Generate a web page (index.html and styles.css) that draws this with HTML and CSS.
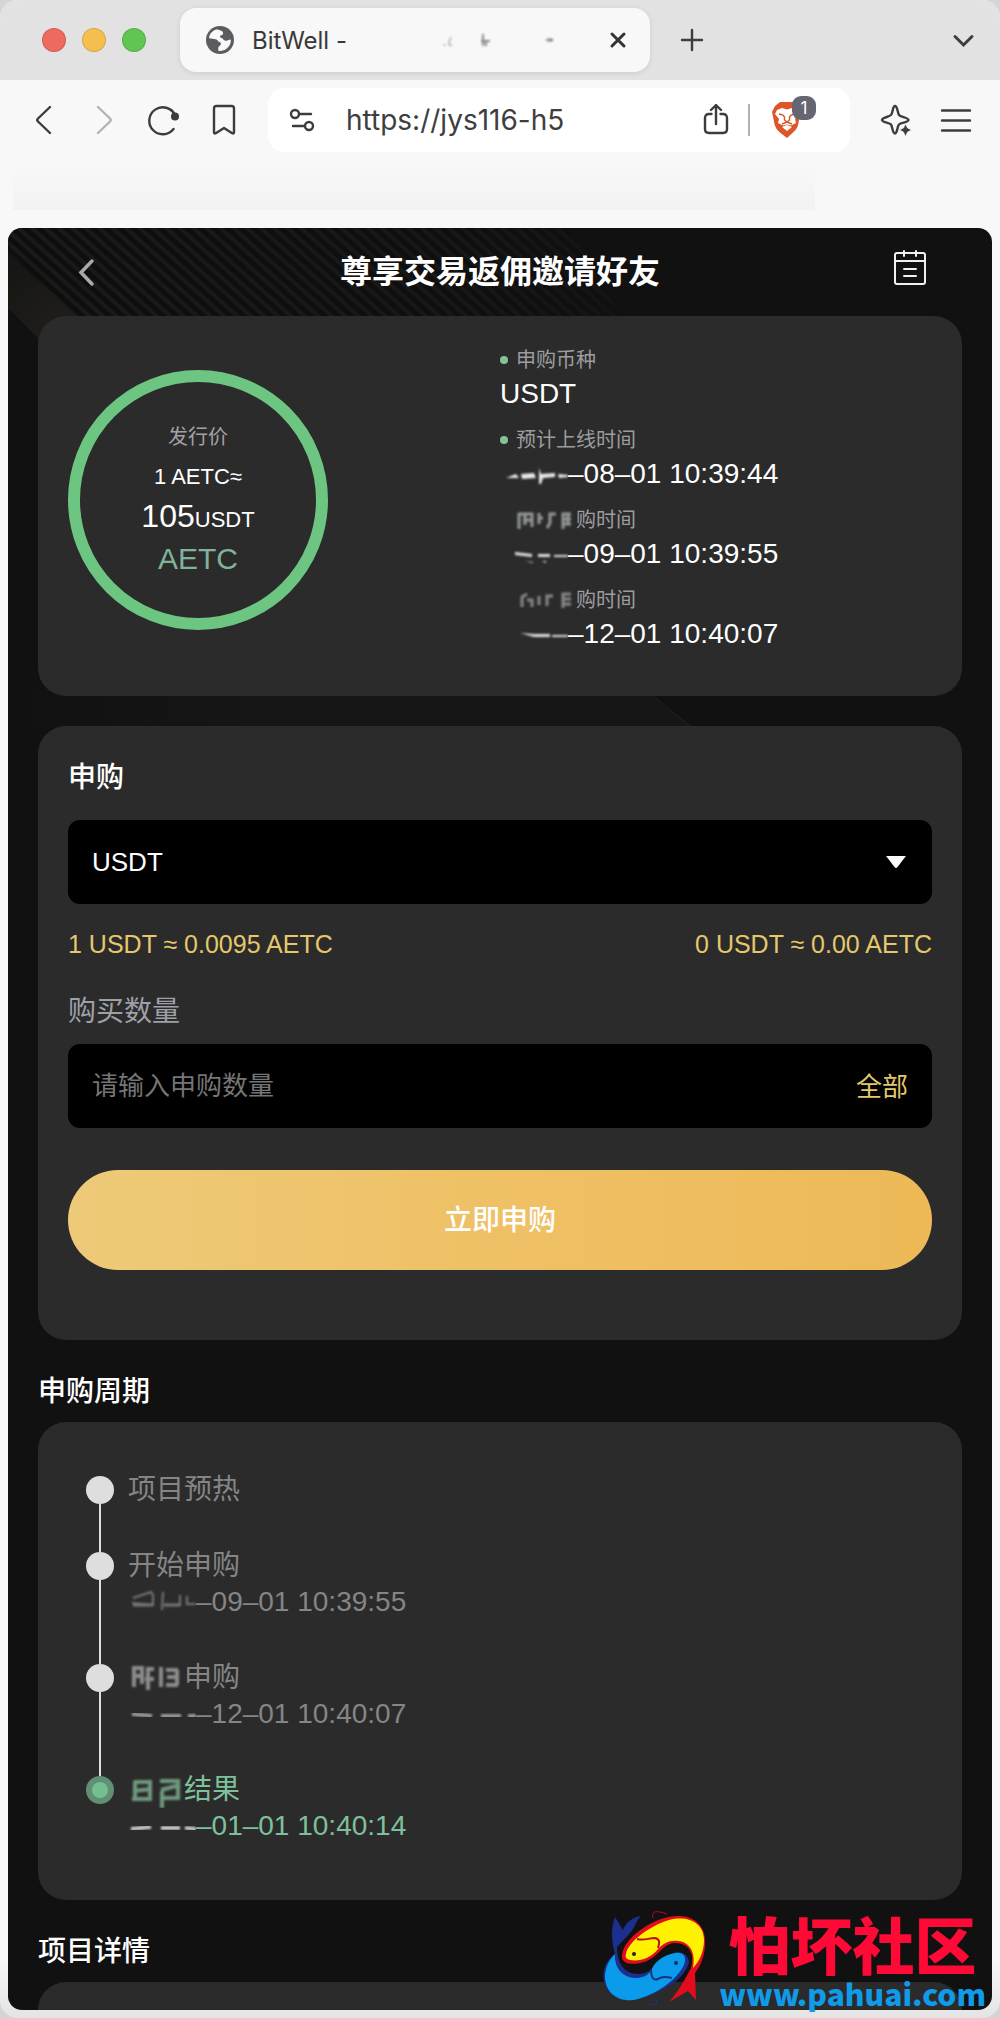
FILE: index.html
```html
<!DOCTYPE html>
<html lang="zh-CN">
<head>
<meta charset="utf-8">
<meta name="viewport" content="width=device-width, initial-scale=1">
<title>BitWell</title>
<link rel="stylesheet" href="styles.css">
</head>
<body>
<svg width="0" height="0" class="defs" aria-hidden="true">
  <defs>
    <filter id="smear" x="-10%" y="-30%" width="120%" height="160%"><feGaussianBlur stdDeviation="0.8"/></filter>
  </defs>
</svg>
<div class="window">
  <div class="tabstrip">
    <div class="lights"><span class="light red"></span><span class="light amber"></span><span class="light green"></span></div>
    <div class="tab">
      <svg class="favicon" viewBox="0 0 28 28"><circle cx="14" cy="14" r="14" fill="#5b5c5f"/><path d="M10 3.5C7 4.600 4.500 7 3.300 10l-.3 2.200c2.500-.2 4 1 6.600 1 2.200.2 2.400 2.600 4.400 3 1.500.4 1.200 2.600-.4 3.600-1.400 1-1.600 2.800-1.200 4.900 4 .8 8-1 10.300-4.200 1.600-2 2.300-4.500 2.100-7-2.200-.1-2.600 1.500-5.300 1.200-2.500-.3-2.300-2.700-4.600-2.900-1.200-.2-1.300-2.300.4-2.500 2.500-.3 2.200-3 .5-4.200-1.400-1-3.500-1.600-5.800-1.600z" fill="#f8f8f8"/></svg>
      <span class="tab-title">BitWell -</span>
      <svg class="tab-smear" viewBox="0 0 130 30" aria-hidden="true"><g filter="url(#smear)" stroke="#888" fill="none"><path d="M19 12l-2 5v3h3" stroke-width="1"/><path d="M11 20h3" stroke="#ccc" stroke-width="2"/><path d="M51 9v12M49 16h9M54 16v5" stroke-width="2"/><path d="M112 15h5" stroke="#bbb"/><path d="M115 15h6" stroke-width="3"/></g></svg>
      <button class="icon-btn small" aria-label="关闭标签页"><svg viewBox="0 0 20 20" width="20" height="20"><path d="M4 4l12 12M16 4L4 16" stroke="#333" stroke-width="3" stroke-linecap="round"/></svg></button>
    </div>
    <button class="icon-btn" aria-label="新标签页"><svg viewBox="0 0 32 32"><path d="M16 6v20M6 16h20" stroke="#3d3d3d" stroke-width="2.400" stroke-linecap="round"/></svg></button>
    <button class="icon-btn tab-menu" aria-label="标签页列表"><svg viewBox="0 0 32 32" fill="none"><path d="M7 12.500l8.500 8.500 8.500-8.500" stroke="#3d3d3d" stroke-width="3" stroke-linecap="round"/></svg></button>
  </div>

  <div class="toolbar">
    <button class="icon-btn" aria-label="后退"><svg viewBox="0 0 32 32" fill="none"><path d="M22 3L10 14.500q-1.500 1.500 0 3L22 29" stroke="#3c3c3e" stroke-width="2.400"  stroke-linecap="round"/></svg></button>
    <button class="icon-btn" aria-label="前进"><svg viewBox="0 0 32 32" fill="none"><path d="M10 3l12 11.500q1.500 1.500 0 3L10 29" stroke="#b3b3b5" stroke-width="2.400" stroke-linecap="round"/></svg></button>
    <button class="icon-btn" aria-label="刷新"><svg viewBox="0 0 32 32" fill="none"><path d="M27 11A13.500 13.500 0 1 0 25.500 25" stroke="#3c3c3e" stroke-width="2.400" stroke-linecap="round"/><circle cx="27" cy="12.500" r="4" fill="#3c3c3e"/></svg></button>
    <button class="icon-btn" aria-label="书签"><svg viewBox="0 0 32 32" fill="none"><path d="M8.500 2h15q2.500 0 2.500 2.500V28q0 2-1.800 1.200L16 24l-8.200 5.200Q6 30 6 28V4.500Q6 2 8.500 2z" stroke="#3c3c3e" stroke-width="2.400" stroke-linejoin="round"/></svg></button>
    <div class="address">
      <svg class="icon" viewBox="0 0 32 32" fill="none" stroke="#3c3c3e" stroke-width="2.400" stroke-linecap="round"><circle cx="9" cy="10" r="4"/><path d="M13 10h12M7 22h12"/><circle cx="23" cy="22" r="4"/></svg>
      <input class="url" type="text" value="https://jys116-h5" aria-label="地址栏">
      <button class="icon-btn" aria-label="分享"><svg viewBox="0 0 32 32" fill="none" stroke="#3c3c3e" stroke-width="2.400" stroke-linecap="round" stroke-linejoin="round"><path d="M11.500 10H9q-4 0-4 4v11q0 4 4 4h14q4 0 4-4V14q0-4-4-4h-2.500M16 20V1M11 6l5-5 5 5"/></svg></button>
      <span class="divider"></span>
      <button class="icon-btn shield" aria-label="防护：1"><svg viewBox="0 0 32 36"><path d="M10 0h13l4 4 3 5-1.500 12q-1 6-5 9L17 36l-6.500-5q-5-4-6-9L2 10l3-6z" fill="#dd5529"/><path d="M7 8l5-2 5 1.500L22 6l5 2 2 4-4 5 1 4-5 2.500-4-1-4 1L8 21l1-4-4-5z" fill="#fff"/><path d="M12 25l5-2 5 2-5 4z" fill="#fff"/><path d="M9 12l4 1 1.500 2v3l2.500 2 2.500-2v-3l1.500-2 4-1M12 22l5-2 5 2" fill="none" stroke="#dd5529" stroke-width="1.400"/></svg><span class="badge">1</span></button>
    </div>
    <button class="icon-btn" aria-label="助手"><svg viewBox="0 0 32 32"><path d="M15 2c2.500 0 2.500 7 4 9s9.500 2.500 9.500 5-7.500 2.500-9.500 4.500-1.500 9-4 9-2.500-7-4-9S2 18.500 2 16s7-3 9-5 1.500-9 4-9z" fill="none" stroke="#3c3c3e" stroke-width="2.400" stroke-linejoin="round"/><path d="M25.500 20l2 4 4 2-4 2-2 4.500-2-4.500-4-2 4-2z" fill="#3c3c3e" stroke="#f8f8f8" stroke-width=".6"/></svg></button>
    <button class="icon-btn" aria-label="菜单"><svg viewBox="0 0 32 32"><path d="M2 6.500h28M2 16.500h28M2 26.500h28" stroke="#3c3c3e" stroke-width="2.400" stroke-linecap="round"/></svg></button>
  </div>
  <div class="bookmarks"><span class="bookmarks-smear"></span></div>

  <main class="app">
    <svg class="backdrop" viewBox="0 0 984 500" preserveAspectRatio="xMinYMin slice" aria-hidden="true">
      <defs>
        <pattern id="lines" width="9" height="9" patternUnits="userSpaceOnUse" patternTransform="rotate(42)"><rect width="9" height="9" fill="#0e0e0e"/><rect width="9" height="4" fill="#1a1a19"/></pattern>
        <linearGradient id="fade" x1="0" x2="1"><stop offset="0" stop-color="#111" stop-opacity="0"/><stop offset=".6" stop-color="#111" stop-opacity=".3"/><stop offset="1" stop-color="#111"/></linearGradient>
        <linearGradient id="olive" x1="0" x2="1" y1="0" y2="1"><stop offset="0" stop-color="#151513"/><stop offset="1" stop-color="#25231e"/></linearGradient>
        <linearGradient id="band" x1="0" x2="1"><stop offset="0" stop-color="#111"/><stop offset=".4" stop-color="#161616"/></linearGradient>
      </defs>
      <path d="M0 0H560L740 300V460H620L70 95 0 20z" fill="url(#lines)"/>
      <path d="M0 0H560L740 300V460H620L70 95 0 20z" fill="url(#fade)"/>
      <path d="M0 24L68 90H100V130H50L0 80z" fill="url(#olive)"/>
      <path d="M0 460H636L686 500H0z" fill="url(#band)"/>
      <path d="M640 464L684 500" stroke="#202020"/>
    </svg>

    <header class="app-header">
      <button class="icon-btn" aria-label="返回"><svg viewBox="0 0 32 32" fill="none"><path d="M20 5L9 16.500 20 28" stroke="#a9a9ae" stroke-width="3.500" stroke-linecap="round"/></svg></button>
      <h1>尊享交易返佣邀请好友</h1>
      <button class="icon-btn calendar" aria-label="申购记录"><svg viewBox="0 0 36 36" fill="none" stroke="#f0f0f0" stroke-width="2" stroke-linecap="round"><rect x="3" y="3" width="30" height="31" rx="2"/><path d="M3 11h30M12 1v5M24 1v5M12 19h12M12 26h12"/></svg></button>
    </header>

    <section class="card summary">
      <div class="ring">
        <span class="ring-label">发行价</span>
        <span class="ring-unit">1 AETC≈</span>
        <span class="ring-price"><b>105</b>USDT</span>
        <span class="ring-coin">AETC</span>
      </div>
      <dl class="facts">
        <div><dt><i class="dot"></i>申购币种</dt><dd>USDT</dd></div>
        <div><dt><i class="dot"></i>预计上线时间</dt><dd><svg class="smear" viewBox="0 0 68 40" aria-hidden="true"><g filter="url(#smear)" fill="#e8e8e8"><path d="M6 24l10-4 3 4zM21 20l13-1 2 5-14 1zM39 14l2 6 14-1v4l-12 1-2 6h-2zM58 20l10 1v2l-9 1z"/></g></svg>–08–01 10:39:44</dd></div>
        <div><dt><svg class="smear label-smear" viewBox="0 0 76 28" aria-hidden="true"><g filter="url(#smear)" fill="none" stroke="#939598" stroke-width="3"><path d="M19 23V8h13v13M23 14h8M25 8v11M39 7v11M38 12h5M47 22l3-5V8h6M63 23V8h8M63 13h8M63 18h8M68 8v10"/></g></svg>购时间</dt><dd><svg class="smear" viewBox="0 0 68 40" aria-hidden="true"><g filter="url(#smear)" fill="#dedede"><path d="M15 18l17 2v3l-17-2zM38 20h12v3H38zM54 21h14v2H54zM25 27l8 1v1zM42 27h4v2z"/></g></svg>–09–01 10:39:55</dd></div>
        <div><dt><svg class="smear label-smear" viewBox="0 0 76 28" aria-hidden="true"><g filter="url(#smear)" fill="none" stroke="#85878a" stroke-width="3"><path d="M22 21V11l5-3M27 14h5v7M39 10v9M47 20V10h6M63 22V8h8M63 13h8M63 18h8"/></g></svg>购时间</dt><dd><svg class="smear" viewBox="0 0 68 40" aria-hidden="true"><g filter="url(#smear)" fill="#dedede"><path d="M20 19l14 1h16v3H34zM52 21h16v2H52z"/></g></svg>–12–01 10:40:07</dd></div>
      </dl>
    </section>

    <form class="card order">
      <h2>申购</h2>
      <div class="field">
        <select aria-label="币种"><option>USDT</option></select>
        <svg class="caret" viewBox="0 0 20 12" aria-hidden="true"><path d="M0 0h20l-8.500 11q-1.500 2-3 0z" fill="#fff"/></svg>
      </div>
      <div class="rates"><span>1 USDT ≈ 0.0095 AETC</span><span>0 USDT ≈ 0.00 AETC</span></div>
      <label for="amount">购买数量</label>
      <div class="field">
        <input id="amount" type="text" placeholder="请输入申购数量">
        <button type="button" class="all">全部</button>
      </div>
      <button type="button" class="submit">立即申购</button>
    </form>

    <h2 class="section-title">申购周期</h2>
    <ol class="card timeline">
      <li><span class="marker"></span><div><p>项目预热</p></div></li>
      <li><span class="marker"></span><div><p>开始申购</p><p><svg class="smear" viewBox="0 0 68 36" aria-hidden="true"><g filter="url(#smear)" fill="none" stroke="#777" stroke-width="2"><path d="M5 14l18-6 2 3v10l-21-2M34 26l1-18M36 21h16V11M59 12v8h9"/><path d="M5 21h20M36 21h16" stroke-width="3"/></g></svg>–09–01 10:39:55</p></div></li>
      <li><span class="marker"></span><div><p><svg class="smear title-smear" viewBox="0 0 56 36" aria-hidden="true"><g filter="url(#smear)" fill="none" stroke="#8c8c8c" stroke-width="4"><path d="M6 27V8h8v16M8 16h8M18 9h8M17 19h9M20 9v21M33 7v20M38 10h12M38 25h12M39 17h11M49 10v15"/></g></svg>申购</p><p><svg class="smear" viewBox="0 0 68 36" aria-hidden="true"><g filter="url(#smear)" stroke="#999" stroke-width="4"><path d="M4 18l20 2M33 20h20M60 20h8"/></g></svg>–12–01 10:40:07</p></div></li>
      <li class="active"><span class="marker"></span><div><p><svg class="smear title-smear" viewBox="0 0 56 36" aria-hidden="true"><g filter="url(#smear)" fill="none" stroke="#6f987f" stroke-width="4"><path d="M6 10h18M5 19l19-2M4 27h20M7 9v18M22 10v17M32 9h20M33 18l19-5M33 26h19M34 19v17M50 9v17"/></g></svg>结果</p><p><svg class="smear" viewBox="0 0 68 36" aria-hidden="true"><g filter="url(#smear)" stroke="#c4c9c6" stroke-width="4"><path d="M3 21l20-2M33 20h19M57 20l11 1"/></g></svg>–01–01 10:40:14</p></div></li>
    </ol>

    <h2 class="section-title">项目详情</h2>
    <section class="card details"></section>
  </main>

  <a class="watermark" href="#">
    <svg class="fish" viewBox="0 0 130 118" aria-hidden="true">
      <path d="M20 54C16 40 16 28 20 17l8 13c3-8 10-13 18-14-6 6-6 12-11 17L22 47c0 14 6 27 21 27 17 0 22-17 37-21 8-2 13 2 14 9-2 10-12 20-24 26-20 12-48 18-57 2C5 78 8 62 20 54z" fill="#1c2f8f"/>
      <path d="M20 54c-1 12 6 24 21 24 6 0 11-2 15-7 3-9 12-16 24-18 9-1 12 4 9 12-7 15-28 30-50 35-16 2-28-7-29-22 0-9 3-17 10-24z" fill="#0a9ceb"/>
      <path d="M56 69c0 8 2 12 7 10 4-3 10-2 14-1" fill="none" stroke="#15347b" stroke-width="2"/>
      <circle cx="81" cy="63" r="2" fill="#102d63"/>
      <path d="M58 18C56 11 61 10 72 14" fill="none" stroke="#b00d22" stroke-width="1"/>
      <path d="M62 99l-1 6-7-1" fill="none" stroke="#1c2f8f" stroke-width="1"/>
      <path d="M27 58C26 43 46 26 66 19c23-8 43 0 44 20 1 13-3 25-10 34l1 27-8-9-19 11c9-10 15-21 22-34 5-17-5-26-17-25-12 1-16 15-30 19-13 4-21 1-22-4z" fill="#e30c1d"/>
      <path d="M31 54c2-12 23-28 43-34 19-5 35 3 35 20 0 12-5 22-11 28 3-15-3-26-15-27-9-1-14 2-20 8-5 7-16 13-28 11-4-1-5-3-4-6z" fill="#fff200"/>
      <path d="M42 39c8 2 11-1 18-1 5 1 5 5 3 10" fill="none" stroke="#b11418" stroke-width="2"/>
      <circle cx="39" cy="54" r="2" fill="#222"/>
    </svg>
    <span class="brand"><span class="brand-name">怕坏社区</span><span class="brand-url">www.pahuai.com</span></span>
  </a>
</div>
</body>
</html>
```
FILE: styles.css
```css
*, *::before, *::after { box-sizing: border-box; }
body {
  margin: 0;
  background: #d6d4d4;
  font-family: "Liberation Sans", "Noto Sans CJK SC", sans-serif;
}
h1, h2, p, dl, dd, ol { margin: 0; padding: 0; }
button, input, select { font: inherit; border: 0; background: none; padding: 0; margin: 0; outline: 0; }
svg { display: block; flex: none; }
.defs { position: absolute; }

.window {
  position: relative;
  display: flex;
  flex-direction: column;
  min-height: 100vh;
  padding-bottom: 8px;
  background: linear-gradient(#f8f8f8 97%, #e4e4e4);
  border-radius: 18px;
  overflow: hidden;
}
.icon-btn { display: block; flex: none; width: 32px; height: 32px; }
.icon-btn svg { width: 32px; height: 32px; }
.icon { width: 32px; height: 32px; }

.tabstrip {
  display: flex;
  align-items: center;
  height: 80px;
  padding: 0 20px 0 42px;
  background: #e2e2e2;
  font-family: Inter, sans-serif;
}
.lights { display: flex; gap: 16px; margin-right: 34px; }
.light { width: 24px; height: 24px; border-radius: 50%; border: 1px solid rgba(0, 0, 0, .12); }
.red { background: #ec6a5e; }
.amber { background: #f4bf4f; }
.green { background: #61c554; }
.tab {
  display: flex;
  align-items: center;
  flex: 0 1 470px;
  height: 64px;
  padding: 0 22px 0 26px;
  margin-right: 26px;
  background: #f8f8f8;
  border-radius: 16px;
  box-shadow: 0 1px 5px rgba(0, 0, 0, .1);
}
.favicon { width: 28px; height: 28px; margin-right: 18px; }
.tab-title { font-size: 24px; color: #38383a; white-space: nowrap; }
.tab-smear { width: 130px; height: 30px; margin-left: auto; margin-right: 46px; }
.small { width: 20px; height: 20px; }
.small svg { width: 20px; height: 20px; }
.tab-menu { margin-left: auto; }

.toolbar {
  display: flex;
  align-items: center;
  gap: 28px;
  height: 80px;
  padding: 0 28px;
}
.address {
  display: flex;
  align-items: center;
  flex: 1;
  min-width: 0;
  height: 64px;
  padding: 0 48px 0 18px;
  margin-right: 2px;
  background: #fff;
  border-radius: 16px;
  font-family: Inter, sans-serif;
}
.url { flex: 1; min-width: 0; margin: 0 28px; font-size: 28px; color: #3e3e40; }
.divider { width: 2px; height: 32px; margin: 0 20px 0 16px; background: #b0b0b0; }
.shield { position: relative; height: 36px; }
.shield svg { height: 36px; }
.badge {
  position: absolute;
  left: 22px;
  top: -6px;
  width: 24px;
  height: 24px;
  border-radius: 9px;
  background: #656672;
  color: #fff;
  font-size: 17px;
  line-height: 24px;
  text-align: center;
}
.bookmarks { height: 68px; padding: 4px 185px 0 13px; }
.bookmarks-smear {
  display: block;
  height: 46px;
  background: linear-gradient(#f8f8f8, #f2f2f4);
}

.app {
  position: relative;
  flex: 1;
  display: flex;
  flex-direction: column;
  margin: 0 8px;
  padding: 0 30px;
  background: #111;
  border-radius: 14px;
  overflow: hidden;
  color: #fff;
}
.app > * { position: relative; }
.app > .backdrop { position: absolute; left: 0; top: 0; width: 100%; height: 500px; }
.app-header {
  display: grid;
  grid-template-columns: 36px 1fr 36px;
  align-items: center;
  height: 88px;
  padding: 0 34px;
}
.app-header h1 { font-size: 32px; line-height: 48px; font-weight: 700; text-align: center; }
.calendar { width: 36px; height: 44px; }
.calendar svg { width: 36px; height: 36px; margin-bottom: 8px; }

.card { background: #2b2b2b; border-radius: 28px; }
.summary {
  display: grid;
  grid-template-columns: 1fr 1fr;
  align-items: center;
  padding: 30px 30px 42px;
  margin-bottom: 30px;
}
.ring {
  display: flex;
  flex-direction: column;
  align-items: center;
  justify-content: center;
  width: 260px;
  height: 260px;
  padding-bottom: 4px;
  border: 12px solid #6cc681;
  border-radius: 50%;
}
.ring-label { font-size: 20px; line-height: 40px; color: #a2a2a6; }
.ring-unit { font-size: 22px; line-height: 40px; }
.ring-price { font-size: 22px; line-height: 38px; }
.ring-price b { font-size: 32px; font-weight: 400; }
.ring-coin { font-size: 30px; line-height: 40px; color: #80b39a; }
.facts { display: grid; gap: 12px; }
.facts dt { display: flex; align-items: center; font-size: 20px; line-height: 28px; color: #9d9da0; }
.facts dd { display: flex; align-items: center; font-size: 28px; line-height: 40px; white-space: nowrap; }
.dot { width: 8px; height: 8px; margin-right: 8px; border-radius: 50%; background: #7fc492; }
.smear { width: 68px; height: 36px; }
.facts dd .smear { height: 40px; }
.facts .label-smear { width: 76px; height: 28px; }
.timeline .title-smear { width: 56px; }

.order { display: flex; flex-direction: column; padding: 32px 30px 70px; }
h2 { font-size: 28px; font-weight: 500; line-height: 40px; }
.order h2 { margin-bottom: 22px; }
.field {
  display: flex;
  align-items: center;
  height: 84px;
  padding: 0 24px;
  background: #000;
  border-radius: 12px;
  font-size: 26px;
}
.field select, .field input { flex: 1; min-width: 0; height: 84px; color: #fff; appearance: none; }
.field input::placeholder { color: #757575; opacity: 1; }
.caret { width: 20px; height: 12px; margin-right: 2px; }
.all, .submit { font-family: "Noto Sans CJK SC", sans-serif; }
.all { padding-bottom: 4px; color: #e6c76c; }
.rates {
  display: flex;
  justify-content: space-between;
  margin: 24px 0 32px;
  font-size: 25px;
  line-height: 32px;
  color: #e6c76c;
}
.order label { margin-bottom: 12px; font-size: 28px; line-height: 40px; color: #9ea0a8; }
.submit {
  height: 100px;
  margin-top: 42px;
  padding-bottom: 4px;
  border-radius: 50px;
  background: linear-gradient(90deg, #edca78, #efc167 45%, #edb957);
  color: #fff;
  font-size: 28px;
  font-weight: 500;
}
.section-title { padding: 32px 0 10px; }

.timeline { padding: 50px 48px 16px; list-style: none; font-size: 28px; line-height: 36px; color: #858585; }
.timeline li { display: flex; gap: 14px; }
.timeline li > div { padding-bottom: 40px; }
.timeline p { display: flex; align-items: center; height: 36px; white-space: nowrap; }
.marker { display: flex; flex-direction: column; align-items: center; width: 28px; padding-top: 4px; }
.marker::before { content: ""; flex: none; width: 28px; height: 28px; border-radius: 50%; background: #dedede; }
.marker::after { content: ""; flex: 1; width: 2px; margin-bottom: -4px; background: #dedede; }
.timeline .active { color: #7fc09c; }
.active .marker::before { background: #74bf90; border: 6px solid #618f73; }
.active .marker::after { display: none; }
.details { flex: 1; min-height: 28px; border-radius: 28px 28px 0 0; }

.watermark {
  position: absolute;
  right: 14px;
  bottom: 0;
  display: flex;
  align-items: flex-end;
  text-decoration: none;
}
.fish { width: 130px; height: 118px; margin-right: -6px; }
.brand {
  display: flex;
  flex-direction: column;
  align-items: center;
  padding-bottom: 8px;
  font-family: "Noto Sans CJK SC", sans-serif;
  font-weight: 900;
}
.brand-name { font-size: 62px; line-height: 66px; color: #ff0a36; }
.brand-url { font-size: 30px; line-height: 34px; color: #109ae8; }
```
